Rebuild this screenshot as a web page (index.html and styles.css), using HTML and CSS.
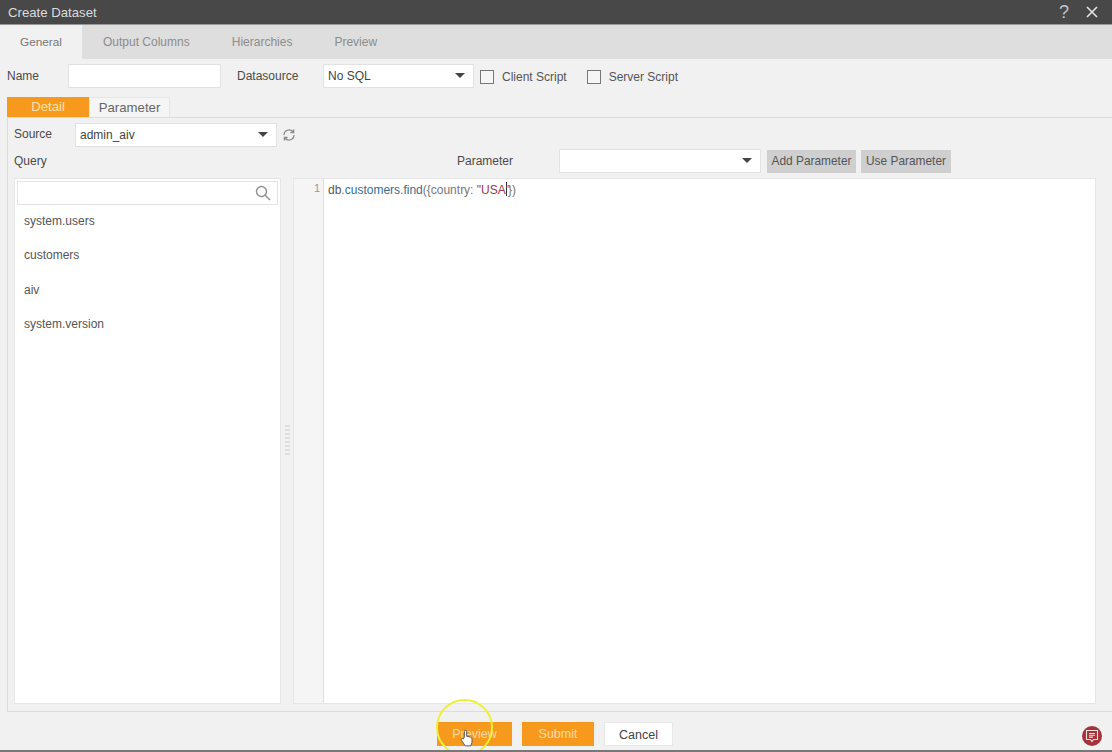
FILE: index.html
```html
<!DOCTYPE html>
<html lang="en">
<head>
    <meta charset="UTF-8">
    <title>Create Dataset</title>
    <link rel="stylesheet" href="styles.css">
</head>
<body>
    <div class="titlebar">
        <span class="titlebar-name">Create Dataset</span>
        <div class="titlebar-icons">
            <span class="help">?</span>
            <svg class="close" width="12" height="12" viewBox="0 0 12 12"><path d="M1 1 L11 11 M11 1 L1 11" stroke="#e4e4e4" stroke-width="1.6"/></svg>
        </div>
    </div>

    <div class="tabs">
        <div class="tab tab-active">General</div>
        <div class="tab tab-output">Output Columns</div>
        <div class="tab tab-hier">Hierarchies</div>
        <div class="tab">Preview</div>
    </div>

    <div class="form-row">
        <label class="lbl-name">Name</label>
        <div class="field field-name"></div>
        <label class="lbl-ds">Datasource</label>
        <div class="field field-ds">No SQL<span class="caret"></span></div>
        <span class="check"></span><span class="check-label">Client Script</span>
        <span class="check check-2"></span><span class="check-label">Server Script</span>
    </div>

    <div class="subtabs">
        <div class="subtab subtab-active">Detail</div>
        <div class="subtab">Parameter</div>
    </div>

    <div class="panel">
        <div class="source-row">
            <label class="lbl-source">Source</label>
            <div class="field field-source">admin_aiv<span class="caret"></span></div>
            <svg class="refresh" width="14" height="14" viewBox="0 0 14 14" fill="none" stroke="#8a8a8a" stroke-width="1.3">
                <path d="M2 7 A5 5 0 0 1 11 4"/><path d="M12 7 A5 5 0 0 1 3 10"/>
                <path d="M11.6 1.4 V4.6 H8.4"/><path d="M2.4 12.6 V9.4 H5.6"/>
            </svg>
        </div>
        <div class="query-row">
            <label class="lbl-query">Query</label>
            <label class="lbl-param">Parameter</label>
            <div class="field field-param"><span class="caret"></span></div>
            <button class="btn-grey btn-add">Add Parameter</button>
            <button class="btn-grey btn-use">Use Parameter</button>
        </div>
        <div class="workspace">
            <div class="collections">
                <div class="search">
                    <svg width="16" height="16" viewBox="0 0 16 16" fill="none" stroke="#8f8f8f" stroke-width="1.4"><circle cx="6.5" cy="6.5" r="5"/><path d="M10.2 10.2 L15 15"/></svg>
                </div>
                <ul class="coll-list">
                    <li>system.users</li>
                    <li>customers</li>
                    <li>aiv</li>
                    <li>system.version</li>
                </ul>
            </div>
            <div class="splitter"><span class="grip"></span></div>
            <div class="editor">
                <div class="gutter">1</div>
                <div class="code"><span class="c-var">db</span><span class="c-pun">.</span><span class="c-prop">customers</span><span class="c-pun">.</span><span class="c-prop">find</span><span class="c-pun">({country: </span><span class="c-str">"USA<i class="cursor"></i>"</span><span class="c-end">})</span></div>
            </div>
        </div>
    </div>

    <div class="footer">
        <button class="btn btn-orange btn-preview">Preview</button>
        <button class="btn btn-orange btn-submit">Submit</button>
        <button class="btn btn-cancel">Cancel</button>
        <span class="highlight"></span>
        <svg class="hand" width="14" height="20" viewBox="0 0 16 20"><path d="M5 9 V2.5 a1.3 1.3 0 0 1 2.6 0 V8 l4.5 1 a2 2 0 0 1 1.6 2 V15 l-1.4 4 H6 L1.6 12.5 a1.2 1.2 0 0 1 2-1.4 Z" fill="#fff" stroke="#555" stroke-width="1.1"/></svg>
        <span class="chat">
            <svg width="14" height="14" viewBox="0 0 14 14" fill="none" stroke="#f3dede" stroke-width="1.1"><path d="M1.5 1.5 H12.5 V10.5 H8.5 L7 12.5 L5.5 10.5 H1.5 Z"/><path d="M4 4.5 H10 M4 6.3 H10 M4 8.1 H8"/></svg>
        </span>
    </div>
</body>
</html>
```

FILE: styles.css
```css
html, body {
    height: 100%;
}
body {
    margin: 0;
    width: 1112px;
    height: 752px;
    overflow: hidden;
    background: #f1f1f1;
    color: #444;
    font-family: "Liberation Sans", Arial, sans-serif;
    font-size: 12px;
    display: flex;
    flex-direction: column;
    box-sizing: border-box;
    border-bottom: 2px solid #777;
}
label { color: #4a4a4a; }
.titlebar {
    height: 24px;
    flex: none;
    background: #484848;
    border-bottom: 1px solid #999;
    display: flex;
    align-items: center;
    justify-content: space-between;
    padding: 0 14px 0 8px;
    color: #dcdcdc;
    font-size: 13.2px;
}
.titlebar-icons {
    display: flex;
    align-items: center;
    gap: 17px;
}
.help { font-size: 18px; color: #c4c4c4; }
.tabs {
    flex: none;
    height: 34px;
    display: flex;
    background: #dedede;
}
.tab {
    line-height: 34px;
    color: #8c8c8c;
    font-size: 12px;
    padding: 0 21px;
}
.tab-active {
    background: #f1f1f1;
    color: #777;
    width: 82px;
    box-sizing: border-box;
    padding: 0;
    text-align: center;
    font-size: 11.8px;
}
.form-row {
    flex: none;
    height: 34px;
    display: flex;
    align-items: center;
    padding-left: 7px;
}
.field {
    background: #fff;
    border: 1px solid #e2e2e2;
    box-sizing: border-box;
    height: 24px;
    line-height: 22px;
    padding-left: 4px;
    position: relative;
    color: #444;
}
.caret {
    position: absolute;
    right: 8px;
    top: 8px;
    border-left: 5px solid transparent;
    border-right: 5px solid transparent;
    border-top: 5px solid #444;
}
.lbl-name { width: 61px; }
.field-name { width: 153px; }
.lbl-ds { margin-left: 16px; width: 86px; }
.field-ds { width: 151px; }
.check {
    width: 14px;
    height: 14px;
    border: 1.5px solid #777;
    box-sizing: border-box;
    background: #f6f6f6;
    margin: 2px 8px 0 6px;
}
.check-2 { margin-left: 20px; }
.check-label { color: #555; margin-top: 2px; }
.subtabs {
    flex: none;
    height: 20px;
    display: flex;
    padding-left: 7px;
    margin-top: 4px;
}
.subtab {
    width: 81px;
    line-height: 20px;
    background: #f5f5f5;
    border: 1px solid #e6e6e6;
    border-bottom: none;
    box-sizing: border-box;
    text-align: center;
    color: #666;
    font-size: 13.2px;
}
.subtab-active {
    width: 82px;
    background: #f7991d;
    border: none;
    color: #ffe3b0;
}
.panel {
    flex: 1;
    min-height: 0;
    margin: 0 0 0 7px;
    border: 1px solid #dcdcdc;
    border-right: none;
    box-sizing: border-box;
    display: flex;
    flex-direction: column;
    padding: 0 16px 7px 6px;
}
.source-row {
    flex: none;
    height: 26px;
    margin-top: 4px;
    display: flex;
    align-items: center;
}
.lbl-source { width: 61px; margin-top: -2px; }
.field-source { width: 202px; }
.refresh { margin-left: 5px; }
.query-row {
    flex: none;
    height: 26px;
    display: flex;
    align-items: center;
}
.lbl-query { width: 443px; }
.lbl-param { width: 102px; }
.field-param { width: 202px; }
.btn-grey {
    height: 23px;
    border: none;
    background: #cfcfcf;
    color: #555;
    font-family: inherit;
    font-size: 11.9px;
    padding: 0;
}
.btn-add { width: 89px; margin: 0 5px 0 6px; }
.btn-use { width: 90px; }
.workspace {
    flex: 1;
    min-height: 0;
    margin-top: 4px;
    display: flex;
}
.collections {
    width: 267px;
    background: #fff;
    border: 1px solid #e6e6e6;
    box-sizing: border-box;
    padding: 2px 2px 0;
}
.search {
    height: 24px;
    border: 1px solid #e4e4e4;
    box-sizing: border-box;
    display: flex;
    align-items: center;
    justify-content: flex-end;
    padding-right: 6px;
}
.coll-list {
    list-style: none;
    margin: -1px 0 0;
    padding: 0 0 0 7px;
    color: #555;
}
.coll-list li {
    height: 34.3px;
    line-height: 34px;
}
.splitter {
    width: 12px;
    display: flex;
    align-items: center;
    justify-content: center;
}
.grip {
    width: 5px;
    height: 32px;
    background: repeating-linear-gradient(#dedede 0 2px, transparent 2px 4px);
}
.editor {
    flex: 1;
    background: #fff;
    border: 1px solid #e6e6e6;
    box-sizing: border-box;
    display: flex;
}
.gutter {
    width: 30px;
    flex: none;
    background: #f5f5f5;
    border-right: 1px solid #ddd;
    box-sizing: border-box;
    text-align: right;
    padding: 3px 3px 0 0;
    font-size: 11px;
    color: #999;
}
.code {
    padding: 3px 0 0 4px;
}
.c-var { color: #555; }
.c-prop { color: #34708f; }
.c-pun { color: #777; }
.c-end { color: #777; margin-left: -2px; }
.c-str { color: #9a3a4c; }
.cursor {
    display: inline-block;
    width: 1px;
    height: 14px;
    margin-right: -1px;
    background: #333;
    vertical-align: -2px;
}
.footer {
    flex: none;
    height: 38px;
    position: relative;
    display: flex;
    align-items: flex-start;
    padding: 10px 0 0 437px;
    box-sizing: border-box;
}
.btn {
    height: 24px;
    border: none;
    font-family: inherit;
    font-size: 12.5px;
    padding: 0;
}
.btn-orange { background: #f7991d; color: #ffdca6; }
.btn-preview { width: 75px; }
.btn-submit { width: 72px; margin-left: 10px; }
.btn-cancel {
    width: 69px;
    margin-left: 10px;
    padding-top: 1px;
    background: #fff;
    border: 1px solid #e8e8e8;
    color: #444;
}
.highlight {
    position: absolute;
    left: 436px;
    top: -13px;
    width: 57px;
    height: 57px;
    border: 2.5px solid #eef03a;
    border-radius: 50%;
    box-sizing: border-box;
}
.hand {
    position: absolute;
    left: 460px;
    top: 16px;
}
.chat {
    position: absolute;
    left: 1082px;
    top: 14px;
    width: 20px;
    height: 20px;
    border-radius: 50%;
    background: #a3343c;
    display: flex;
    align-items: center;
    justify-content: center;
}
```
